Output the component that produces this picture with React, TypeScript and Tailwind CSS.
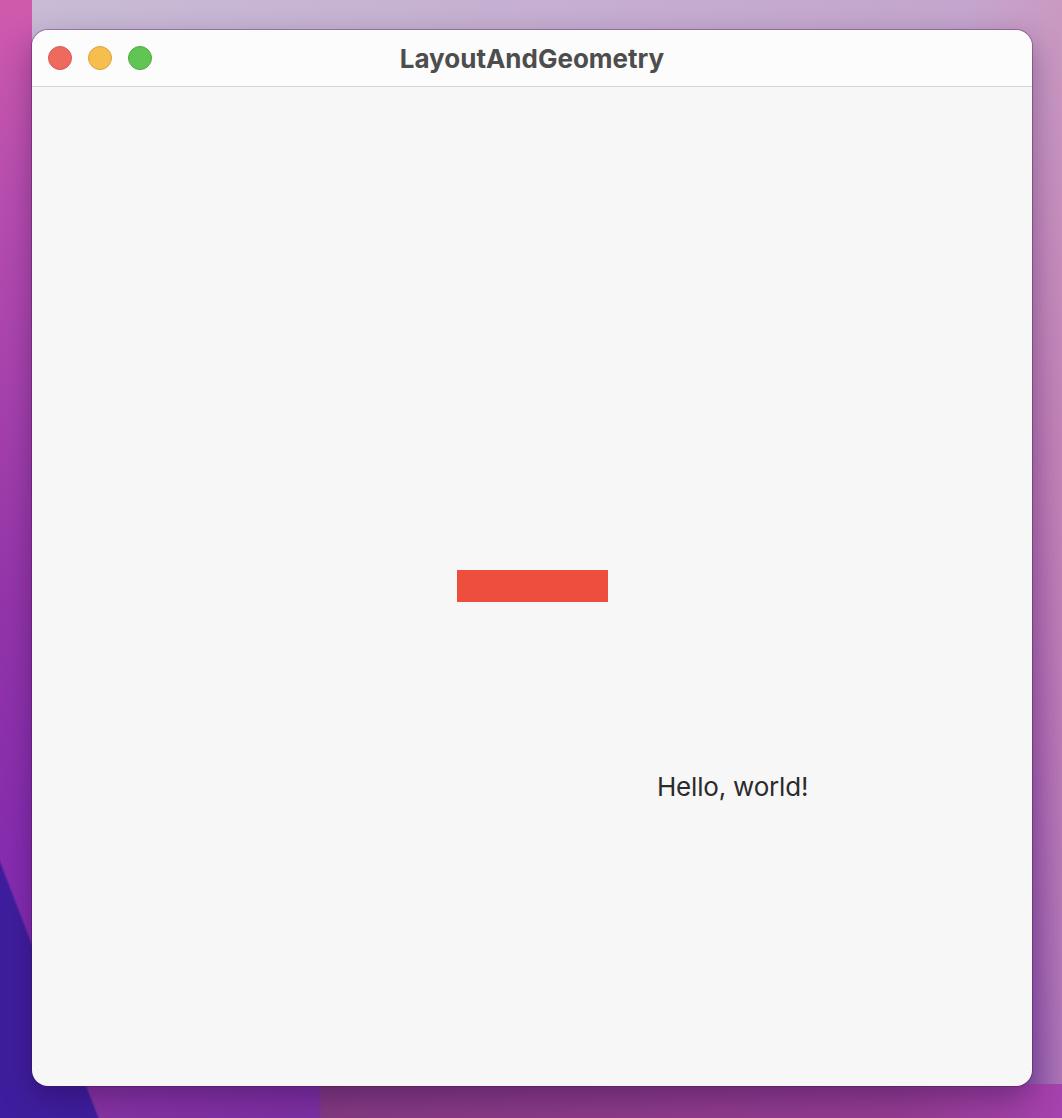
export default function App() {
  return (
    <div className="h-[1118px] w-[1062px] overflow-hidden bg-[linear-gradient(249deg,rgba(0,0,0,0)_93.3%,#3f1e9e_93.5%),linear-gradient(90deg,rgba(0,0,0,0)_318px,#843a80_322px,#953c92_85%,#a642ae_100%),linear-gradient(180deg,rgba(208,80,168,0.9)_0px,rgba(180,60,170,0.85)_200px,rgba(145,45,168,0.9)_600px,rgba(130,40,176,0.9)_860px),linear-gradient(270deg,rgba(205,150,190,0.7)_0px,rgba(205,150,190,0)_90px),linear-gradient(160deg,#c8bcd6_0%,#c4a4cc_25%,#a858a8_55%,#8a34a4_75%,#5a22a0_100%)] bg-[length:100%_100%,100%_34px,32px_100%,100%_100%,100%_100%] bg-[position:0_0,0_100%,0_0,0_0,0_0] bg-no-repeat pl-[32px] pt-[30px]">
      <div className="flex h-[1056px] w-[1000px] flex-col overflow-hidden rounded-[16px] shadow-[0_0_0_1px_rgba(60,20,70,0.35),0_12px_30px_rgba(30,0,60,0.35)]">
        <div className="relative flex h-[57px] shrink-0 items-center border-b border-[#d5d5d5] bg-[#fcfcfc] pl-[16px]">
          <div className="flex gap-[16px]">
            <span className="h-[24px] w-[24px] rounded-full border border-[#d65a4d] bg-[#ee6a5e]" />
            <span className="h-[24px] w-[24px] rounded-full border border-[#d9a43c] bg-[#f6be4f]" />
            <span className="h-[24px] w-[24px] rounded-full border border-[#4fa842] bg-[#61c554]" />
          </div>
          <div className="absolute inset-0 flex items-center justify-center font-['Inter',sans-serif] text-[26px] font-bold text-[#4d4d4d]">
            LayoutAndGeometry
          </div>
        </div>
        <div className="flex flex-1 flex-col bg-[#f7f7f7]">
          <div className="ml-[425px] mt-[483px] h-[32px] w-[151px] bg-[#ee4e3e]" />
          <p className="ml-[625px] mt-[169px] font-['Inter',sans-serif] text-[26px] leading-[32px] tracking-[-0.2px] text-[#2b2b2b]">
            Hello, world!
          </p>
        </div>
      </div>
    </div>
  );
}
